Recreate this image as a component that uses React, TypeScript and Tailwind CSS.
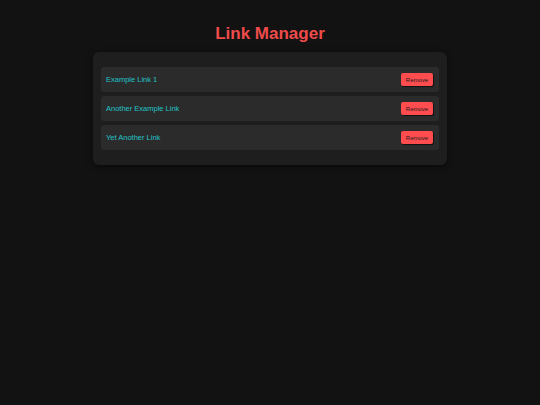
const LINKS = ["Example Link 1", "Another Example Link", "Yet Another Link"];

export default function App() {
  return (
    <div
      className="min-h-[405px] w-full bg-[#121212] pt-[24px]"
      style={{ fontFamily: '"Liberation Sans", Arial, sans-serif' }}
    >
      <h1 className="mb-[8px] text-center text-[17px] font-bold leading-[20px] text-[#ee4b4b]">
        Link Manager
      </h1>

      <div className="mx-auto w-[354px] rounded-[6px] bg-[#1e1e1e] px-[8px] py-[15px] shadow-[0_2px_6px_rgba(0,0,0,0.5)]">
        <ul className="flex flex-col gap-[4px]">
          {LINKS.map((l) => (
            <li
              key={l}
              className="flex h-[25px] items-center justify-between rounded-[3px] bg-[#2b2b2b] pl-[5px] pr-[6px]"
            >
              <span className="text-[7.5px] text-[#22c4c8]">{l}</span>
              <button
                type="button"
                className="h-[13px] w-[32px] rounded-[2px] bg-[#ff4d4f] text-[6px] leading-none text-[#1a1a1a] shadow-[1px_1px_1px_rgba(0,0,0,0.6)]"
              >
                Remove
              </button>
            </li>
          ))}
        </ul>
      </div>
    </div>
  );
}
